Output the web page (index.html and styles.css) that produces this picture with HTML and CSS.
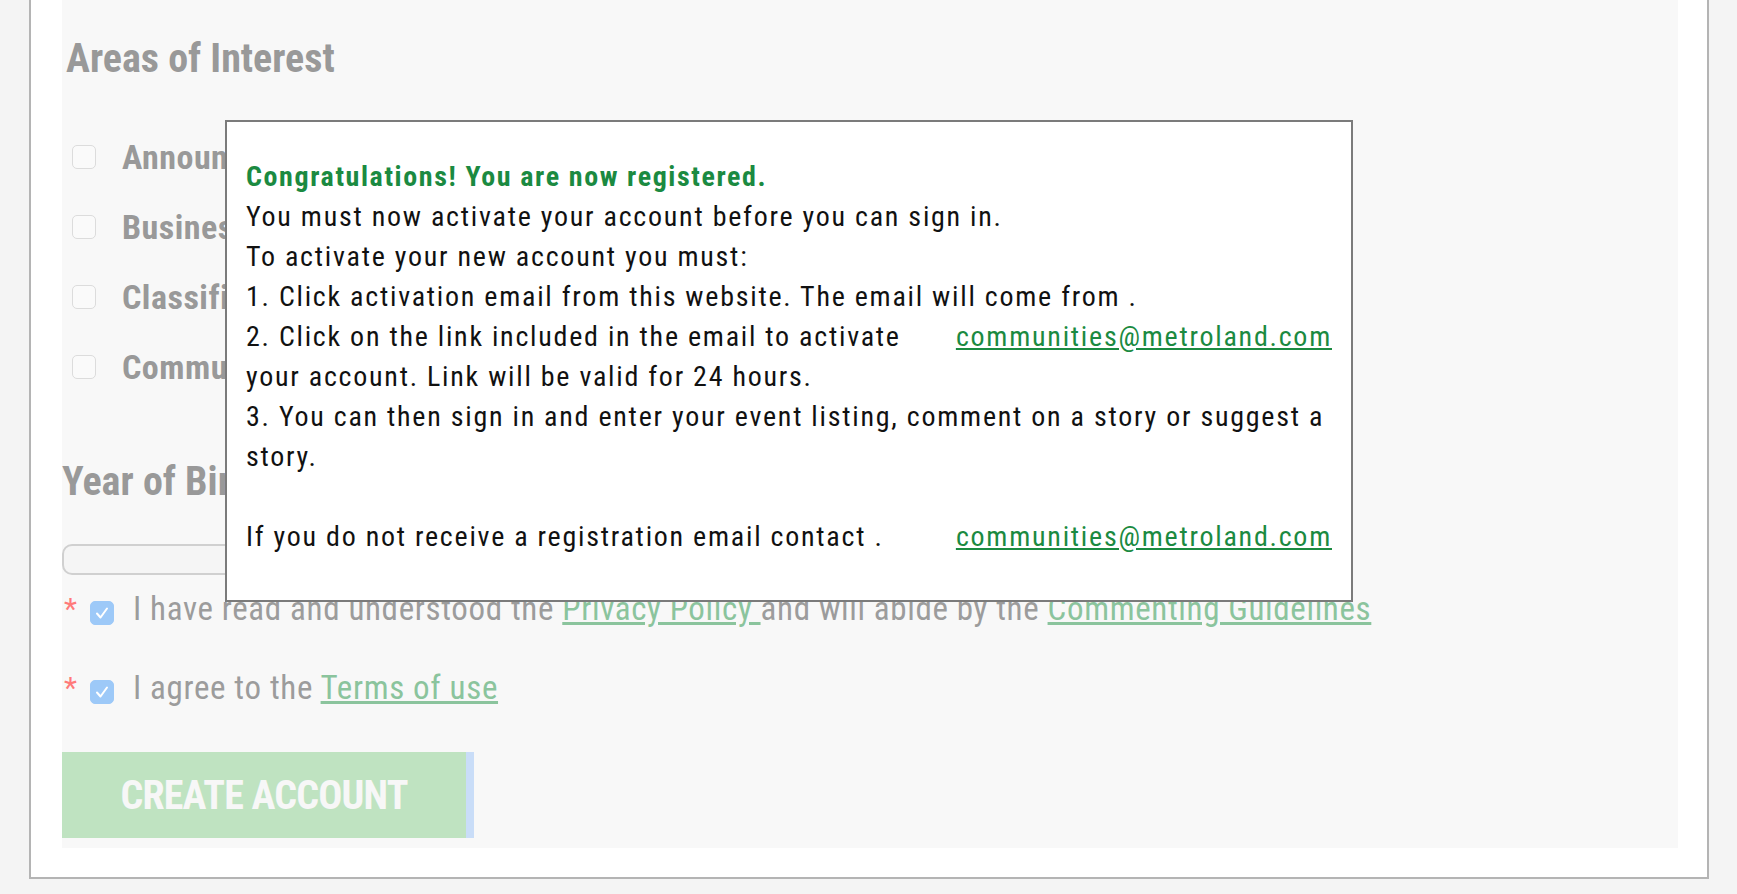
FILE: index.html
```html
<!DOCTYPE html>
<html lang="en">
<head>
    <meta charset="UTF-8">
    <meta name="viewport" content="width=device-width, initial-scale=1.0">
    <title>Create Account</title>
    <link rel="stylesheet" href="styles.css">
</head>
<body>
    <div class="page">
        <div class="panel">
            <form class="signup">
                <h2 class="section-title interests-title">Areas of Interest</h2>
                <ul class="interest-list">
                    <li class="interest"><span class="box"></span><span class="interest-label">Announcements</span></li>
                    <li class="interest"><span class="box"></span><span class="interest-label">Business</span></li>
                    <li class="interest"><span class="box"></span><span class="interest-label">Classifieds</span></li>
                    <li class="interest"><span class="box"></span><span class="interest-label">Community</span></li>
                </ul>

                <h2 class="section-title birth-title">Year of Birth</h2>
                <input class="birth-input" type="text">

                <div class="agree agree-privacy">
                    <span class="required">*</span>
                    <span class="box checked"><svg viewBox="0 0 24 24" width="24" height="24"><polyline points="7,12.5 10.5,16.5 17,7.5" fill="none" stroke="#fff" stroke-width="2" stroke-linecap="round" stroke-linejoin="round"/></svg></span>
                    <span class="agree-text">I have read and understood the <a href="#">Privacy Policy </a>and will abide by the <a href="#">Commenting Guidelines</a></span>
                </div>
                <div class="agree agree-terms">
                    <span class="required">*</span>
                    <span class="box checked"><svg viewBox="0 0 24 24" width="24" height="24"><polyline points="7,12.5 10.5,16.5 17,7.5" fill="none" stroke="#fff" stroke-width="2" stroke-linecap="round" stroke-linejoin="round"/></svg></span>
                    <span class="agree-text">I agree to the <a href="#">Terms of use</a></span>
                </div>

                <button class="create-btn" type="button">CREATE ACCOUNT</button>
            </form>
        </div>

        <div class="dialog">
            <div class="dialog-title">Congratulations! You are now registered.</div>
            <div class="dialog-line">You must now activate your account before you can sign in.</div>
            <div class="dialog-line">To activate your new account you must:</div>
            <div class="dialog-line">1. Click activation email from this website. The email will come from .</div>
            <div class="dialog-line split">
                <span>2. Click on the link included in the email to activate</span>
                <a href="#">communities@metroland.com</a>
            </div>
            <div class="dialog-line">your account. Link will be valid for 24 hours.</div>
            <div class="dialog-line">3. You can then sign in and enter your event listing, comment on a story or suggest a</div>
            <div class="dialog-line">story.</div>
            <div class="dialog-line blank"></div>
            <div class="dialog-line split">
                <span>If you do not receive a registration email contact .</span>
                <a href="#">communities@metroland.com</a>
            </div>
        </div>
    </div>
</body>
</html>
```

FILE: styles.css
```css
body {
    margin: 0;
    background-color: #f4f4f4;
    font-family: "Roboto Condensed", "Roboto", sans-serif;
}
.page {
    position: relative;
}
.panel {
    margin: 0 28px 0 29px;
    padding: 0 29px 29px 31px;
    background: #fff;
    border: 2px solid #b4b4b4;
    border-top: none;
}
.signup {
    background: #f8f8f8;
    padding: 39px 0 10px 0;
}
.section-title {
    margin: 0;
    font-size: 40px;
    line-height: 40px;
    font-weight: bold;
    color: #999;
}
.interests-title {
    padding-left: 4px;
}
.interest-list {
    list-style: none;
    margin: 43px 0 0 0;
    padding: 0;
}
.interest {
    display: flex;
    align-items: center;
    height: 70px;
}
.box {
    display: inline-block;
    width: 22px;
    height: 22px;
    border: 1px solid #dcdcdc;
    border-radius: 5px;
    background: #fafafa;
    flex-shrink: 0;
}
.box svg {
    display: block;
    margin: -1px;
}
.box.checked {
    background: #9dc9f8;
    border-color: #9dc9f8;
}
.interest .box {
    margin-left: 10px;
}
.interest-label {
    margin-left: 26px;
    font-size: 34px;
    line-height: 70px;
    font-weight: bold;
    color: #999;
    letter-spacing: 0.5px;
}
.birth-title {
    margin-top: 60px;
}
.birth-input {
    display: block;
    box-sizing: border-box;
    margin: 42px 0 0 0;
    width: 480px;
    height: 31px;
    border: 2px solid #d0d0d0;
    border-radius: 10px;
    background: #f5f5f5;
}
.agree {
    display: flex;
    align-items: flex-start;
    height: 40px;
}
.agree-privacy {
    margin-top: 14px;
}
.agree-terms {
    margin-top: 39px;
}
.required {
    width: 28px;
    padding-left: 2px;
    box-sizing: border-box;
    font-size: 30px;
    line-height: 40px;
    color: #ff7a7a;
}
.agree .box {
    margin-top: 12px;
}
.agree-text {
    margin-left: 19px;
    font-size: 33px;
    line-height: 40px;
    color: #9c9c9c;
    letter-spacing: 0.65px;
    white-space: nowrap;
}
.agree-text a {
    color: #8bc49d;
}
.create-btn {
    display: block;
    margin-top: 44px;
    width: 412px;
    height: 86px;
    padding: 0;
    background: #bfe3c1;
    border: none;
    border-right: 8px solid #c9ddf8;
    box-sizing: border-box;
    color: #f7f7f7;
    font-family: "Roboto Condensed", "Roboto", sans-serif;
    font-size: 40px;
    font-weight: bold;
    letter-spacing: -0.8px;
    text-align: center;
}
.dialog {
    position: absolute;
    left: 225px;
    top: 120px;
    width: 1128px;
    height: 482px;
    box-sizing: border-box;
    padding: 35px 19px 0 19px;
    background: #fff;
    border: 2px solid #7b7b7b;
    font-size: 28px;
    line-height: 40px;
    color: #111;
    letter-spacing: 1.75px;
    white-space: nowrap;
}
.dialog-title {
    color: #1b8a41;
    font-weight: bold;
    letter-spacing: 1.6px;
}
.dialog-line.blank {
    height: 40px;
}
.split {
    display: flex;
    justify-content: space-between;
}
.dialog a {
    color: #1b8a41;
}
```
